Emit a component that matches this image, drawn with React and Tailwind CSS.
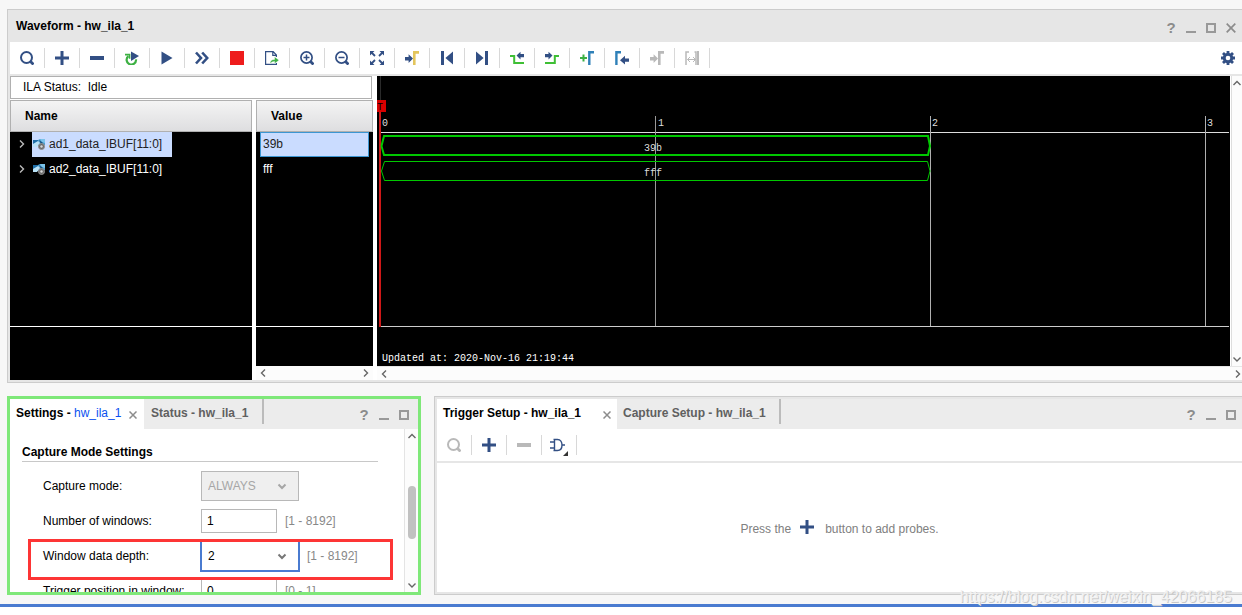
import { useState } from 'react'

const NAVY = '#324f84'
const GREEN = '#3cb043'
const BLUE = '#2f80b8'
const GRAY = '#b9b9b9'

function Icon({ children, size = 14 }) {
  return (
    <svg width={size} height={size} viewBox={`0 0 ${size} ${size}`} fill="none" className="shrink-0" aria-hidden="true">
      {children}
    </svg>
  )
}

const SearchIcon = ({ color = NAVY }) => (
  <Icon><circle cx="6.5" cy="6.5" r="5.5" stroke={color} strokeWidth="2" /><path d="M10.5 10.5l3 3" stroke={color} strokeWidth="2.8" /></Icon>
)
const PlusIcon = () => <Icon><path d="M7 0v14M0 7h14" stroke={NAVY} strokeWidth="3" /></Icon>
const MinusIcon = ({ color = NAVY }) => <Icon><path d="M0 7h14" stroke={color} strokeWidth="4" /></Icon>
const RerunIcon = () => (
  <Icon>
    <path d="M11 8.4A4.7 4.7 0 1 1 3.4 5.2" stroke={GREEN} strokeWidth="2.2" />
    <path d="M0 3.6h4.6v4.2" stroke={GREEN} strokeWidth="1.6" />
    <path d="M6 .5l8 4.4-8 5z" fill={NAVY} />
  </Icon>
)
const PlayIcon = () => <Icon><path d="M1.5 .5l11 6.5-11 6.5z" fill={NAVY} /></Icon>
const FastIcon = () => <Icon><path d="M1 1.5L6 7l-5 5.5M7.2 1.5l5 5.5-5 5.5" stroke={NAVY} strokeWidth="2.6" /></Icon>
const StopIcon = () => <Icon><path d="M0 0h14v14H0z" fill="#ee1c1c" /></Icon>
const ExportIcon = () => (
  <Icon>
    <path d="M11.4 6V4L8.2 .6H.6v12.8h10.8V12M7.8 .6v3.8h3.6" stroke={NAVY} strokeWidth="1.2" />
    <path d="M5 12.6c0-2.8 1.6-4 4.6-4.2V5.8L14 9.2l-4.4 3.4v-2.2c-2 0-3.200.8-4.600 2.200z" fill={GREEN} stroke="#fff" strokeWidth=".4" />
  </Icon>
)
const ZoomIcon = ({ plus }) => (
  <Icon>
    <circle cx="6.5" cy="6.5" r="5.6" stroke={NAVY} strokeWidth="1.7" />
    <path d="M10.5 10.5l3 3" stroke={NAVY} strokeWidth="2.8" />
    <path d={plus ? 'M3.500 6.500h6M6.500 3.500v6' : 'M3.500 6.500h6'} stroke={NAVY} strokeWidth="1.5" />
  </Icon>
)
const FitIcon = () => (
  <Icon>
    <path d="M0 0h4.500L0 4.500zM14 0v4.500L9.500 0zM0 14V9.500L4.500 14zM14 14H9.500L14 9.500z" fill={NAVY} />
    <path d="M1 1l4 4M13 1L9 5M1 13l4-4M13 13L9 9" stroke={NAVY} strokeWidth="1.8" />
  </Icon>
)
const ArrowToEdge = ({ arrow = NAVY, edge = '#e3c55c' }) => (
  <Icon>
    <path d="M0 6h3.6V3.2L8 7.6 3.6 12V9.4H0z" fill={arrow} />
    <path d="M9.3 14V1.4H14" stroke={edge} strokeWidth="2.6" />
  </Icon>
)
const FirstIcon = () => <Icon><path d="M1 0h3v14H1zM13 .5v13L5.4 7z" fill={NAVY} /></Icon>
const LastIcon = () => <Icon><path d="M10 0h3v14h-3zM1 .5v13L8.6 7z" fill={NAVY} /></Icon>
const PrevEdgeIcon = () => (
  <Icon>
    <path d="M0 4.9h4.2v7.2H14" stroke="#3fbf35" strokeWidth="2" />
    <path d="M14 3h-3.5V.8l-4 3.8 4 3.8V6.2H14z" fill={NAVY} />
  </Icon>
)
const NextEdgeIcon = () => (
  <Icon>
    <path d="M0 12.1h9.800V4.900H14" stroke="#3fbf35" strokeWidth="2" />
    <path d="M0 3h3.5V.8l4 3.8-4 3.8V6.2H0z" fill={NAVY} />
  </Icon>
)
const AddMarkerIcon = () => (
  <Icon><path d="M3.5 3.5v7M0 7h7" stroke={GREEN} strokeWidth="2" /><path d="M9.3 14V1.2H14" stroke={BLUE} strokeWidth="2.4" /></Icon>
)
const EdgeBackIcon = () => (
  <Icon><path d="M1.4 14V1.2H6" stroke={BLUE} strokeWidth="2.4" /><path d="M14 7.5h-4V4.800L5 9.200l5 4.300v-2.700h4z" fill={NAVY} /></Icon>
)
const SpanIcon = () => (
  <Icon>
    <path d="M1 14V1h3M11 14V1H9.500" stroke={GRAY} strokeWidth="1.5" />
    <path d="M13 0v14" stroke={GRAY} strokeWidth="2" />
    <path d="M2.500 8.500h8M5 6L2.500 8.500 5 11M8 6l2.500 2.500L8 11" stroke={GRAY} />
  </Icon>
)
const GearIcon = () => (
  <Icon>
    <path d="M7 0v14M0 7h14M2 2l10 10M12 2L2 12" stroke={NAVY} strokeWidth="2.8" />
    <circle cx="7" cy="7" r="3.7" stroke={NAVY} strokeWidth="3" />
    <circle cx="7" cy="7" r="2.3" fill="#fff" />
  </Icon>
)
const GateIcon = () => (
  <svg width="18" height="22" viewBox="0 0 18 22" fill="none" aria-hidden="true" className="shrink-0">
    <path d="M3.5 5.500H7.500c3 0 4.500 2.500 4.500 5.500s-1.500 5.500-4.500 5.500H3.500M4.500 5.500v11M0 8h4.500M0 14h4.500M12 11h3" stroke={NAVY} strokeWidth="1.400" />
    <path d="M18 17v5h-5z" fill="#333" />
  </svg>
)
const SignalIcon = () => (
  <svg width="12" height="12" viewBox="0 0 12 12" fill="none" aria-hidden="true" className="shrink-0">
    <path d="M0 2h5l2-1h5v6H7L5 8H0z" fill="#4d9fd0" />
    <path d="M0 2h5v2L0 6z" fill="#1f6fa8" />
    <path d="M0 6l5-3 2 2-3 4H0z" fill="#b9e2f7" />
    <path d="M7 1h5v4l-3-1z" fill="#7cc3ea" />
    <path d="M6 2l4 3-2 1z" fill="#174f7d" />
    <circle cx="8.500" cy="8.500" r="3" fill="#6b6b6b" stroke="#8f8f8f" />
    <circle cx="8.500" cy="8.500" r="1.200" fill="#d8d8d8" />
  </svg>
)

const CHEVRONS = {
  up: 'M1.500 6L5 2.500 8.500 6',
  down: 'M1.500 2.500L5 6l3.500-3.500',
  left: 'M6 0.500L2.500 4 6 7.500',
  right: 'M4 0.500L7.500 4 4 7.500',
}
function Chevron({ dir, className = 'text-[#666]', width = 1.4 }) {
  return (
    <svg width="10" height="8" viewBox="0 0 10 8" fill="none" aria-hidden="true" className={`shrink-0 ${className}`}>
      <path d={CHEVRONS[dir]} stroke="currentColor" strokeWidth={width} />
    </svg>
  )
}

const waveTools = [
  ['Search', <SearchIcon />],
  ['Add', <PlusIcon />],
  ['Remove', <MinusIcon />],
  ['Auto re-trigger', <RerunIcon />],
  ['Run trigger', <PlayIcon />],
  ['Run trigger immediate', <FastIcon />],
  ['Stop trigger', <StopIcon />],
  ['Export data', <ExportIcon />],
  ['Zoom in', <ZoomIcon plus />],
  ['Zoom out', <ZoomIcon />],
  ['Zoom fit', <FitIcon />],
  ['Go to cursor', <ArrowToEdge />],
  ['Go to first', <FirstIcon />],
  ['Go to last', <LastIcon />],
  ['Previous transition', <PrevEdgeIcon />],
  ['Next transition', <NextEdgeIcon />],
  ['Add marker', <AddMarkerIcon />],
  ['Previous marker', <EdgeBackIcon />],
  ['Next marker', <ArrowToEdge arrow={GRAY} edge={GRAY} />],
  ['Swap cursors', <SpanIcon />],
]

const probeTools = [
  ['Search probes', <SearchIcon color={GRAY} />],
  ['Add probe', <PlusIcon />],
  ['Remove probe', <MinusIcon color={GRAY} />],
  ['Trigger condition', <GateIcon />],
]

function Toolbar({ tools, children }) {
  return (
    <div className="flex h-8 items-center bg-white">
      {tools.map(([label, icon]) => (
        <button key={label} type="button" aria-label={label} className="flex h-5 w-[35px] items-center justify-center border-r border-[#d8d8d8]">
          {icon}
        </button>
      ))}
      {children}
    </div>
  )
}

function WindowButtons({ close }) {
  return (
    <div className="ml-auto flex items-center gap-2.5 text-[#8c8c8c]">
      <button type="button" aria-label="Help" className="w-2.5 text-[15px] leading-3 font-bold">?</button>
      <button type="button" aria-label="Minimize" className="flex h-2.5 w-2.5 items-end"><span className="h-0.5 w-full bg-[#999]" /></button>
      <button type="button" aria-label="Maximize" className="h-2.5 w-2.5 border-2 border-[#999]" />
      {close && (
        <button type="button" aria-label="Close">
          <Icon size={10}><path d="M.7.7l8.6 8.6M9.3.7L.7 9.3" stroke="#8c8c8c" strokeWidth="1.7" /></Icon>
        </button>
      )}
    </div>
  )
}

const TabClose = () => (
  <button type="button" aria-label="Close tab" className="mt-0.5">
    <Icon size={8}><path d="M.5.5l7 7M7.5.5l-7 7" stroke="#8c8c8c" strokeWidth="1.5" /></Icon>
  </button>
)

const signals = [
  { name: 'ad1_data_IBUF[11:0]', value: '39b', selected: true },
  { name: 'ad2_data_IBUF[11:0]', value: 'fff' },
]

const headClass = 'h-8 border border-[#b0b0b0] bg-linear-to-b from-[#f4f4f4] to-[#dedee0] text-left font-bold text-black'

function NamePane() {
  return (
    <div className="flex w-[242px] flex-col bg-black">
      <table className="w-full border-separate border-spacing-0">
        <thead><tr><th className={`${headClass} pl-3.5`}>Name</th></tr></thead>
        <tbody>
          {signals.map(s => (
            <tr key={s.name}>
              <td className="h-[25px] p-0 text-white">
                <div className="flex items-center">
                  <button type="button" aria-label={`Expand ${s.name}`} className="flex w-[22px] justify-center pb-0.5"><Chevron dir="right" className="text-[#bbb]" /></button>
                  <span className={`flex h-[25px] w-[140px] items-center gap-1 pb-0.5 pl-px ${s.selected ? 'bg-[#cadcff] text-[#222]' : ''}`}>
                    <SignalIcon />{s.name}
                  </span>
                </div>
              </td>
            </tr>
          ))}
        </tbody>
      </table>
      <div className="mt-36 h-px bg-white" />
    </div>
  )
}

function ValuePane() {
  return (
    <div className="flex w-[117px] flex-col">
      <div className="flex-1 bg-black">
        <table className="w-full border-separate border-spacing-0">
          <thead><tr><th className={`${headClass} pl-3.5`}>Value</th></tr></thead>
          <tbody>
            {signals.map(s => (
              <tr key={s.name}>
                <td className="h-[25px] px-1 py-0 text-white">
                  <span className={`flex h-[25px] items-center border pb-0.5 pl-0.5 ${s.selected ? 'border-[#3c96d2] bg-[#cadcff] text-[#222]' : 'border-transparent'}`}>{s.value}</span>
                </td>
              </tr>
            ))}
          </tbody>
        </table>
        <div className="mt-36 h-px bg-white" />
      </div>
      <div className="flex h-3.5 items-center justify-between bg-[#fcfcfc] px-[3px]">
        <Chevron dir="left" />
        <Chevron dir="right" />
      </div>
    </div>
  )
}

function Waves() {
  return (
    <svg className="h-[290px] min-w-0 flex-1 bg-black font-['Liberation_Mono',monospace] text-[10px]" role="img" aria-label="Captured waveforms">
      <g shapeRendering="crispEdges">
        <path d="M3.5 0v24" stroke="#2a2a2a" />
        <path d="M4 56.5h848" stroke="#ddd" />
        <path d="M4 250.5h848" stroke="#ccc" />
        <path d="M553.5 40v210M828.5 40v210" stroke="#b0b0b0" />
        <path d="M278.5 40v210" stroke="#999" />
        <path d="M3 36v215" stroke="#d01818" strokeWidth="2" />
        <path d="M0 24h9v12H0z" fill="#d80000" />
      </g>
      <text x="0" y="34" fill="#000">T</text>
      <path d="M4.5 70L7 60h544l2 10-2 9H7z" stroke="#00c800" strokeWidth="2" fill="none" />
      <path d="M4.5 95L7.5 85.5h543l2.5 9.5-2.5 9.5h-543z" stroke="#00c800" fill="none" />
      <g fill="#ddd">
        <text x="5" y="50">0</text>
        <text x="281" y="50">1</text>
        <text x="555" y="50">2</text>
        <text x="830" y="50">3</text>
        <text x="267" y="75">39b</text>
        <text x="267" y="100">fff</text>
      </g>
      <text x="5" y="285" fill="#fff">Updated at: 2020-Nov-16 21:19:44</text>
    </svg>
  )
}

function WaveformPanel() {
  return (
    <section className="border-y border-l border-[#ccc] bg-[#e6e6e6] pb-0.5 pl-0.5">
      <header className="flex h-8 items-center pr-1.5 pl-1.5">
        <h1 className="font-bold text-black">Waveform - hw_ila_1</h1>
        <div className="mt-1 ml-auto"><WindowButtons close /></div>
      </header>
      <Toolbar tools={waveTools}>
        <button type="button" aria-label="Waveform settings" className="mr-[7px] ml-auto"><GearIcon /></button>
      </Toolbar>
      <div className="mt-0.5 flex bg-white">
        <div className="flex w-[367px] shrink-0 flex-col">
          <p className="h-[23px] w-[362px] border border-[#b0b0b0] pl-3 leading-[21px] text-black">ILA Status:&nbsp; Idle</p>
          <div className="mt-px flex flex-1 gap-1">
            <NamePane />
            <ValuePane />
          </div>
        </div>
        <div className="min-w-0 flex-1">
          <div className="flex">
            <Waves />
            <div className="ml-px flex w-[11px] flex-col items-center justify-between border-l border-[#ddd] bg-[#fcfcfc] py-[3px]">
              <Chevron dir="up" />
              <Chevron dir="down" />
            </div>
          </div>
          <div className="flex h-3.5 items-center justify-between border-t border-[#e6e6e6] bg-[#fcfcfc] pl-[3px]">
            <Chevron dir="left" />
            <Chevron dir="right" />
          </div>
        </div>
      </div>
    </section>
  )
}

function Field({ id, label, range, children, marked }) {
  return (
    <div className="relative flex h-[30px] items-center">
      <label htmlFor={id} className="w-[158px] shrink-0 whitespace-nowrap">{label}</label>
      {children}
      {range && <span className="ml-2 text-[#888]">{range}</span>}
      {marked && <div className="pointer-events-none absolute -top-0.5 -left-[15px] z-10 h-[41px] w-[365px] border-3 border-[#fd3535]" />}
    </div>
  )
}

function Dropdown({ id, value, options, onChange, disabled }) {
  return (
    <div className="relative">
      <select id={id} value={value} onChange={onChange} disabled={disabled}
        className={`h-[30px] w-[98px] appearance-none border pl-1.5 outline-none ${disabled ? 'border-[#b8b8b8] bg-[#efefef] text-[#a6a6a6] opacity-100' : 'border-[#4a7bd0] bg-white text-black ring-1 ring-[#4a7bd0]'}`}>
        {options.map(o => <option key={o}>{o}</option>)}
      </select>
      <span className="pointer-events-none absolute top-[11px] right-3"><Chevron dir="down" width={2} className={disabled ? 'text-[#a6a6a6]' : 'text-[#777]'} /></span>
    </div>
  )
}

function SettingsPanel() {
  const [windows, setWindows] = useState('1')
  const [depth, setDepth] = useState('2')
  const [position, setPosition] = useState('0')
  const inputClass = 'h-6 w-[76px] border border-[#b8b8b8] bg-white pl-[5px] text-black outline-none'

  return (
    <section className="w-[414px] shrink-0 border-3 border-[#7fe879] bg-white">
      <header className="flex h-[30px] bg-[#ececec] pr-[9px]">
        <div className="flex w-[134px] items-center bg-white pl-1.5">
          <button type="button" className="mr-2 pb-0.5 font-bold whitespace-nowrap text-black">Settings - <span className="font-normal text-[#0a50f0]">hw_ila_1</span></button>
          <TabClose />
        </div>
        <button type="button" className="h-[25px] w-[120px] border-r-2 border-[#bbb] pt-0.5 pl-[7px] text-left font-bold text-[#606060]">Status - hw_ila_1</button>
        <div className="ml-auto flex pt-0.5"><WindowButtons /></div>
      </header>
      <div className="flex h-[163px] overflow-hidden">
        <form className="flex-1 pt-3.5 pr-[26px] pl-3 text-black">
          <h2 className="border-b border-[#c8c8c8] leading-[18px] font-bold">Capture Mode Settings</h2>
          <div className="mt-[9px] flex flex-col gap-[5px] pl-[21px]">
            <Field id="mode" label="Capture mode:">
              <Dropdown id="mode" value="ALWAYS" options={['ALWAYS']} disabled />
            </Field>
            <Field id="windows" label="Number of windows:" range="[1 - 8192]">
              <input id="windows" className={inputClass} value={windows} onChange={e => setWindows(e.target.value)} />
            </Field>
            <Field id="depth" label="Window data depth:" range="[1 - 8192]" marked>
              <Dropdown id="depth" value={depth} options={['1', '2', '4', '8', '16']} onChange={e => setDepth(e.target.value)} />
            </Field>
            <Field id="position" label="Trigger position in window:" range="[0 - 1]">
              <input id="position" className={inputClass} value={position} onChange={e => setPosition(e.target.value)} />
            </Field>
          </div>
        </form>
        <div className="flex w-3.5 flex-col items-center border-l border-[#e4e4e4] bg-[#fcfcfc] py-[3px]">
          <Chevron dir="up" />
          <div className="mt-[46px] mb-auto h-[53px] w-2 rounded-full bg-[#c1c1c1]" />
          <Chevron dir="down" />
        </div>
      </div>
    </section>
  )
}

function TriggerPanel() {
  return (
    <section className="flex min-w-0 flex-1 flex-col border-y border-l border-[#ccc] bg-[#e6e6e6] py-0.5 pl-0.5">
      <header className="flex h-[30px] bg-[#ececec] pr-1.5">
        <div className="flex w-[180px] items-center justify-between bg-white pr-1.5 pl-1.5">
          <button type="button" className="pb-0.5 font-bold text-black">Trigger Setup - hw_ila_1</button>
          <TabClose />
        </div>
        <button type="button" className="h-[25px] w-[164px] border-r-2 border-[#bbb] pt-0.5 pl-1.5 text-left font-bold text-[#606060]">Capture Setup - hw_ila_1</button>
        <div className="ml-auto flex pt-0.5"><WindowButtons /></div>
      </header>
      <Toolbar tools={probeTools} />
      <div className="mt-0.5 flex flex-1 items-center justify-center bg-white pt-0.5 text-[#808080]">
        Press the<span className="mr-[11px] mb-1 ml-[9px]"><PlusIcon /></span>button to add probes.
      </div>
    </section>
  )
}

export default function App() {
  return (
    <div className="relative min-h-screen overflow-hidden bg-white font-['Liberation_Sans',Arial,sans-serif] text-xs">
      <main className="border-b-3 border-[#4a7bd0] bg-[#f7f7f7] pt-[9px] pb-[9px] pl-[7px]">
        <WaveformPanel />
        <div className="mt-[13px] flex gap-[13px]">
          <SettingsPanel />
          <TriggerPanel />
        </div>
      </main>
      <p className="pointer-events-none absolute right-2.5 bottom-1.5 text-base text-[#f2f2f2] [text-shadow:1px_1px_0_#c8c8c8]">https://blog.csdn.net/weixin_42066185</p>
    </div>
  )
}
